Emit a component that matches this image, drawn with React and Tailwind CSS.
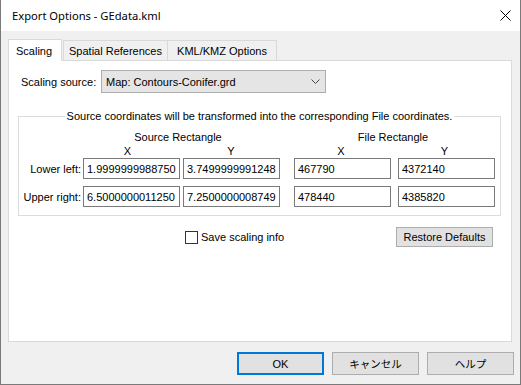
const body = "font-['Liberation_Sans','Noto_Sans_CJK_JP',sans-serif]"
const title = "font-['Noto_Sans',sans-serif]"
const jp = "font-['Noto_Sans_CJK_JP',sans-serif] text-[10.5px]"

function Field({ value, className = '' }) {
  return (
    <input
      type="text"
      readOnly
      value={value}
      className={`h-[21px] w-[97px] border border-[#7a7a7a] bg-white px-[3px] text-[11px] text-black outline-none ${className}`}
    />
  )
}

function CoordRow({ label, values }) {
  return (
    <div className="flex items-center">
      <span className="w-[62px] whitespace-nowrap text-right leading-[14px]">{label}</span>
      <Field value={values[0]} className="ml-[2px]" />
      <Field value={values[1]} className="ml-[3px] w-[96px]" />
      <Field value={values[2]} className="ml-[14px] w-[96px]" />
      <Field value={values[3]} className="ml-[7px]" />
    </div>
  )
}

export default function App() {
  return (
    <div className={`${body} flex h-[385px] w-[521px] flex-col border-x border-b border-[#7a7a7a] bg-[#f0f0f0] text-[11px] text-black`}>
      {/* title bar */}
      <div className="flex h-[31px] shrink-0 items-center bg-white pl-[11px] pr-[9px]">
        <span className={`${title} text-[11.2px] leading-[16px]`}>Export Options - GEdata.kml</span>
        <svg className="ml-auto" width="11" height="11" viewBox="0 0 11 11">
          <path d="M0.5 0.5 L10.5 10.5 M10.5 0.5 L0.5 10.5" stroke="#000" strokeWidth="1" fill="none" />
        </svg>
      </div>

      <div className="flex flex-col px-[7px] pt-[8px]">
        {/* tabs */}
        <div className="flex h-[21px] items-end">
          <div className="relative z-10 -mb-px flex h-[22px] w-[54px] items-center border border-b-0 border-[#d9d9d9] bg-white pl-[7px] leading-[16px]">
            Scaling
          </div>
          <div className="ml-px flex h-[20px] w-[105px] items-center justify-center whitespace-nowrap border border-b-0 border-[#d9d9d9] bg-[#f0f0f0] leading-[16px]">
            Spatial References
          </div>
          <div className="-ml-px flex h-[20px] w-[110px] items-center justify-center whitespace-nowrap border border-b-0 border-[#d9d9d9] bg-[#f0f0f0] leading-[16px]">
            KML/KMZ Options
          </div>
        </div>

        {/* panel */}
        <div className="flex h-[282px] w-[504px] flex-col border border-[#d9d9d9] bg-white pt-[9px]">
          <div className="flex items-center">
            <span className="ml-[12px] w-[80px] leading-[16px]">Scaling source:</span>
            <div className="flex h-[23px] w-[225px] items-center border border-[#adadad] bg-[#e5e5e5] pl-[4px] pr-[4px]">
              <span className="leading-[16px]">Map: Contours-Conifer.grd</span>
              <svg className="ml-auto mr-[1px]" width="9" height="5" viewBox="0 0 9 5">
                <path d="M0.5 0.5 L4.5 4.5 L8.5 0.5" stroke="#444" strokeWidth="1" fill="none" />
              </svg>
            </div>
          </div>

          <fieldset className="ml-[9px] mt-[15px] w-[483px] border border-[#dcdcdc] px-0 pb-[8px]">
            <legend className="mx-auto px-[2px] leading-[16px]">
              Source coordinates will be transformed into the corresponding File coordinates.
            </legend>
            <div className="mt-[6px] flex leading-[14px]">
              <span className="w-[64px]" />
              <span className="w-[196px] pr-[6px] text-center">Source Rectangle</span>
              <span className="ml-[14px] w-[200px] text-center">File Rectangle</span>
            </div>
            <div className="flex leading-[14px]">
              <span className="w-[64px]" />
              <span className="w-[97px] pr-[8px] text-center">X</span>
              <span className="ml-[3px] w-[96px] text-center">Y</span>
              <span className="ml-[14px] w-[96px] text-center">X</span>
              <span className="ml-[7px] w-[97px] text-center">Y</span>
            </div>
            <CoordRow label="Lower left:" values={['1.9999999988750', '3.7499999991248', '467790', '4372140']} />
            <div className="mt-[7px]">
              <CoordRow label="Upper right:" values={['6.5000000011250', '7.2500000008749', '478440', '4385820']} />
            </div>
          </fieldset>

          <div className="mt-[11px] flex items-center">
            <label className="ml-[176px] flex items-center">
              <span className="h-[13px] w-[13px] border border-[#333] bg-white" />
              <span className="ml-[3px] leading-[16px]">Save scaling info</span>
            </label>
            <button className="ml-auto mr-[18px] flex h-[20px] w-[97px] items-center justify-center border border-[#adadad] bg-[#e1e1e1] leading-[16px]">
              Restore Defaults
            </button>
          </div>
        </div>

        {/* dialog buttons */}
        <div className="-mr-px mt-[10px] flex justify-end gap-[8px]">
          <button className="flex h-[23px] w-[87px] items-center justify-center border-2 border-[#0078d7] bg-[#e1e1e1] leading-[16px]">
            OK
          </button>
          <button className={`${jp} flex h-[23px] w-[87px] items-center justify-center border border-[#adadad] bg-[#e1e1e1] leading-[16px]`}>
            キャンセル
          </button>
          <button className={`${jp} flex h-[23px] w-[87px] items-center justify-center border border-[#adadad] bg-[#e1e1e1] leading-[16px]`}>
            ヘルプ
          </button>
        </div>
      </div>
    </div>
  )
}
